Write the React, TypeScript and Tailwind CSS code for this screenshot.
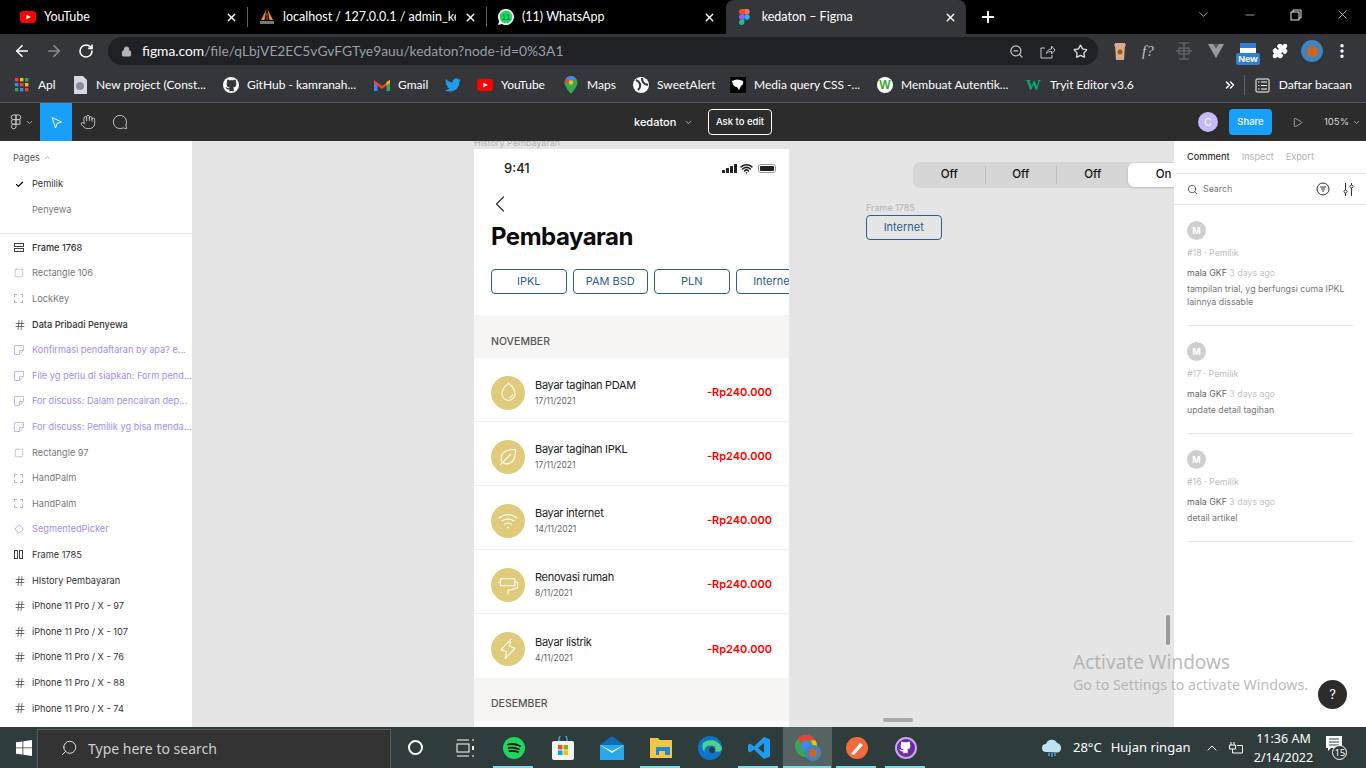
import React from 'react';
import {
  ArrowLeft, ArrowRight, RotateCw, Lock, ZoomOut, Star, Puzzle, Plus, X, ChevronDown, ChevronUp, Minus,
  Check, Hand, MessageCircle, Play, Search, Hash, Wifi,
  Square, MoreVertical, ChevronLeft, ChevronsRight, Github,
} from 'lucide-react';
import { PiDropLight, PiLeafLight, PiWifiHighLight, PiPaintRollerLight, PiLightningLight } from 'react-icons/pi';

const YouTubeIcon = () => (
  <svg width="16" height="12" viewBox="0 0 16 12" className="shrink-0">
    <rect width="16" height="12" rx="3" fill="#f00" />
    <path d="M6.4 3.4 10.8 6 6.4 8.6z" fill="#fff" />
  </svg>
);

const TabClose = () => <X className="w-[13px] h-[13px] text-white shrink-0" strokeWidth={2.5} />;

const FigmaLogo = ({ size = 16 }: { size?: number }) => (
  <svg width={size * 0.67} height={size} viewBox="0 0 24 36" className="shrink-0">
    <path d="M12 0H6a6 6 0 0 0 0 12h6z" fill="#f24e1e" />
    <path d="M12 0h6a6 6 0 0 1 0 12h-6z" fill="#ff7262" />
    <path d="M12 12H6a6 6 0 0 0 0 12h6z" fill="#a259ff" />
    <circle cx="18" cy="18" r="6" fill="#1abcfe" />
    <path d="M6 24h6v6a6 6 0 1 1-6-6z" fill="#0acf83" />
  </svg>
);

const TabBar = () => (
  <div className="h-[34px] bg-black flex items-end shrink-0 text-white text-[12.5px] font-['Lato',sans-serif]">
    <div className="w-[247px] h-[34px] flex items-center pl-5 pr-[9px] gap-2">
      <YouTubeIcon />
      <span className="flex-1">YouTube</span>
      <TabClose />
    </div>
    <div className="w-px h-[20px] bg-[#5f6368] mb-[7px]" />
    <div className="w-[238px] h-[34px] flex items-center pl-[11px] pr-[9px] gap-2">
      <svg width="16" height="16" viewBox="0 0 16 16" className="shrink-0">
        <path d="M7.500 0 2 11h3.500zM8.500 0 14 11h-3.500z" fill="#e8912c" />
        <path d="M7.400 4h1.200v7H7.400z" fill="#a8551a" />
        <path d="M1 12h14v3H1z" fill="#77787a" />
      </svg>
      <span className="flex-1 overflow-hidden whitespace-nowrap">localhost / 127.0.0.1 / admin_ked</span>
      <TabClose />
    </div>
    <div className="w-px h-[20px] bg-[#5f6368] mb-[7px]" />
    <div className="w-[238px] h-[34px] flex items-center pl-[11px] pr-[9px] gap-2">
      <svg width="16" height="16" viewBox="0 0 16 16" className="shrink-0">
        <path d="M8 0a8 8 0 0 0-6.800 12.200L0 16l3.900-1.100A8 8 0 1 0 8 0z" fill="#fff" />
        <circle cx="8" cy="8" r="6.400" fill="#25d366" />
        <text x="8" y="11" fontSize="8.500" fill="#083" textAnchor="middle" fontFamily="Liberation Sans">11</text>
      </svg>
      <span className="flex-1">(11) WhatsApp</span>
      <TabClose />
    </div>
    <div className="w-[240px] h-[34px] ml-[1px] bg-[#35363a] rounded-t-lg flex items-center pl-[13px] pr-[9px] gap-[12px]">
      <FigmaLogo />
      <span className="flex-1">kedaton – Figma</span>
      <TabClose />
    </div>
    <div className="w-[44px] h-[34px] flex items-center justify-center">
      <Plus className="w-[18px] h-[18px] text-white" strokeWidth={2.5} />
    </div>
    <div className="ml-auto h-[34px] flex items-center pr-[16px] pb-[5px] text-[#d8d8d8]">
      <ChevronDown className="w-[15px] h-[15px] mr-[32px]" strokeWidth={1.2} />
      <Minus className="w-[14px] h-[14px] mr-[33px]" strokeWidth={1.2} />
      <svg width="12" height="12" viewBox="0 0 12 12" className="mr-[33px]" fill="none" stroke="#e8e8e8">
        <rect x="1" y="3" width="8" height="8" />
        <path d="M3 3V1h8v8H9" />
      </svg>
      <X className="w-[15px] h-[15px]" strokeWidth={1.2} />
    </div>
  </div>
);

const AddressBar = () => (
  <div className="h-[34px] bg-[#35363a] flex items-center shrink-0 font-['Lato',sans-serif]">
    <ArrowLeft className="w-[18px] h-[18px] text-white ml-[13px]" strokeWidth={2.2} />
    <ArrowRight className="w-[18px] h-[18px] text-[#8a8b8d] ml-[14px]" strokeWidth={2.2} />
    <RotateCw className="w-[16px] h-[16px] text-white ml-[15px]" strokeWidth={2.4} />
    <div className="ml-[14px] w-[990px] h-[28px] rounded-full bg-[#202124] flex items-center">
      <Lock className="w-[11px] h-[11px] ml-[13px] text-[#b5b6b8]" fill="#b5b6b8" />
      <div className="ml-[10px] text-[13.8px] text-[#9aa0a6] flex-1 whitespace-nowrap">
        <span className="text-white">figma.com</span>/file/qLbjVE2EC5vGvFGTye9auu/kedaton?node-id=0%3A1
      </div>
      <ZoomOut className="w-[15px] h-[15px] text-[#c4c6c8]" />
      <svg width="16" height="15" viewBox="0 0 16 15" fill="none" stroke="#c4c6c8" className="ml-[16px]">
        <path d="M5 4H1v10h11v-3M6.500 9.500C7 6.500 9 5 11.500 5V2L15 6l-3.500 4V7.500c-2 0-4 .5-5 2z" />
      </svg>
      <Star className="w-[15px] h-[15px] text-[#d8d8d8] ml-[17px] mr-[10px]" strokeWidth={2.2} />
    </div>
    <svg width="14" height="18" viewBox="0 0 14 18" className="ml-[15px]">
      <path d="M2 1h10l1 3H1zM2 4h10l-1 14H3z" fill="#d9a98a" />
      <circle cx="7" cy="10" r="2.500" fill="#a4571e" />
    </svg>
    <span className="ml-[15px] w-[20px] text-[15px] italic text-[#c4c4c4] font-['Liberation_Serif',serif]">f?</span>
    <svg width="18" height="18" viewBox="0 0 18 18" className="ml-[13px]" stroke="#6f7072" fill="none">
      <path d="M9 1v16M1 9h16M4 1h10M4 17h10" />
      <rect x="4" y="6" width="10" height="6" />
    </svg>
    <svg width="16" height="14" viewBox="0 0 16 14" className="ml-[15px]">
      <path d="M0 0h16L8 14z" fill="#9a9b9d" />
      <path d="M5 0h6L8 5z" fill="#5c5d5f" />
    </svg>
    <div className="ml-[12px] w-[24px] h-[28px] flex flex-col items-center relative">
      <div className="w-[16px] h-[12px] bg-white rounded-[1px] mt-[6px]">
        <div className="h-[5px] bg-[#2f7fd6]" />
      </div>
      <div className="absolute top-[16px] w-[24px] h-[12px] rounded-[2px] bg-[#2f7fd6] text-white text-[9.5px] font-bold leading-[12px] text-center font-['Liberation_Sans',sans-serif]">New</div>
    </div>
    <Puzzle className="w-[16px] h-[16px] text-white ml-[12px]" fill="#fff" />
    <div className="ml-[13px] w-[22px] h-[22px] rounded-full bg-[#3f83bf] flex items-center justify-center">
      <div className="w-[11px] h-[11px] rounded-full bg-[#d0651f]" />
    </div>
    <MoreVertical className="w-[18px] h-[18px] text-white ml-[10px]" strokeWidth={2.6} />
  </div>
);

const GridIcon = () => (
  <svg width="16" height="16" viewBox="0 0 16 16" className="shrink-0">
    {[0, 1, 2].map((r) =>
      [0, 1, 2].map((c) => (
        <rect key={`${r}-${c}`} x={1 + c * 5} y={1 + r * 5} width="3.400" height="3.400"
          fill={['#ea4335', '#fbbc04', '#34a853', '#4285f4', '#ea4335', '#fbbc04', '#34a853', '#4285f4', '#ea4335'][r * 3 + c]} />
      ))
    )}
  </svg>
);

const Bookmark = ({ icon, label, className }: { icon: React.ReactNode; label?: string; className: string }) => (
  <div className={`flex items-center gap-2 whitespace-nowrap ${className}`}>
    {icon}
    {label && <span>{label}</span>}
  </div>
);

const BookmarksBar = () => (
  <div className="h-[35px] bg-[#35363a] flex items-center shrink-0 pl-[14px] text-white text-[12px] border-b border-[#55565a] font-['Lato',sans-serif]">
    <Bookmark className="w-[58px]" icon={<GridIcon />} label="Apl" />
    <Bookmark className="w-[151px]" label="New project (Const..." icon={
      <svg width="16" height="18" viewBox="0 0 16 18" className="shrink-0">
        <path d="M2 0h9l4 4v14H2z" fill="#d7d7e0" />
        <circle cx="8" cy="10" r="4" fill="#8a8aa0" />
      </svg>} />
    <Bookmark className="w-[151px]" label="GitHub - kamranah..." icon={
      <div className="w-4 h-4 rounded-full bg-white flex items-center justify-center shrink-0">
        <Github className="w-[13px] h-[13px] text-[#35363a]" fill="#35363a" />
      </div>} />
    <Bookmark className="w-[71px]" label="Gmail" icon={
      <svg width="16" height="12" viewBox="0 0 16 12" className="shrink-0">
        <path d="M0 1v11h3.500V5z" fill="#4285f4" />
        <path d="M16 1v11h-3.500V5z" fill="#34a853" />
        <path d="M0 1 8 7l8-6v3L8 10 0 4z" fill="#ea4335" />
        <path d="M12.500 3 16 1v3l-3.500 2.500z" fill="#fbbc04" />
      </svg>} />
    <Bookmark className="w-[32px]" icon={
      <svg width="16" height="14" viewBox="0 0 24 20" className="shrink-0">
        <path d="M24 2.400a10 10 0 0 1-2.800.8A5 5 0 0 0 23.300.5a10 10 0 0 1-3.100 1.200A4.900 4.900 0 0 0 11.800 6.200 14 14 0 0 1 1.700 1a4.900 4.900 0 0 0 1.500 6.600 4.900 4.900 0 0 1-2.200-.6 4.900 4.900 0 0 0 3.900 4.900 5 5 0 0 1-2.200.1 4.900 4.900 0 0 0 4.600 3.400A10 10 0 0 1 0 17.400 14 14 0 0 0 21.500 5z" fill="#1d9bf0" />
      </svg>} />
    <Bookmark className="w-[86px]" icon={<YouTubeIcon />} label="YouTube" />
    <Bookmark className="w-[70px]" label="Maps" icon={
      <svg width="14" height="18" viewBox="0 0 14 18" className="shrink-0 mx-px">
        <path d="M7 0a6.500 6.500 0 0 0-6.500 6.500C.5 11 7 18 7 18s6.500-7 6.500-11.500A6.500 6.500 0 0 0 7 0z" fill="#34a853" />
        <path d="M2 2.300 7 6.500l4.800-4.200A6.500 6.500 0 0 0 2 2.300z" fill="#4285f4" />
        <path d="M.5 6.500 7 6.500 2 2.300A6.500 6.500 0 0 0 .5 6.500z" fill="#ea4335" />
        <circle cx="7" cy="6.500" r="2.300" fill="#fbbc04" />
      </svg>} />
    <Bookmark className="w-[97px]" label="SweetAlert" icon={
      <svg width="16" height="16" viewBox="0 0 16 16" className="shrink-0">
        <circle cx="8" cy="8" r="8" fill="#fff" />
        <path d="M3 3q3 1 4 4t-2 6M9 1q0 4 3 6l3 1" stroke="#35363a" strokeWidth="2" fill="none" />
      </svg>} />
    <Bookmark className="w-[147px]" label="Media query CSS -..." icon={
      <svg width="16" height="16" viewBox="0 0 16 16" className="shrink-0">
        <rect width="16" height="16" fill="#000" />
        <path d="M2 4q5-3 11 0 1 3-2 5l-2 4-2-3q-4 0-5-6z" fill="#fff" />
      </svg>} />
    <Bookmark className="w-[149px]" label="Membuat Autentik..." icon={
      <div className="w-4 h-4 rounded-full bg-white text-[#3fa535] text-[12px] font-bold leading-4 text-center shrink-0 font-['Liberation_Sans',sans-serif]">W</div>} />
    <Bookmark className="" label="Tryit Editor v3.6" icon={
      <span className="w-4 text-[#04aa6d] text-[15px] font-bold leading-4 shrink-0 font-['Liberation_Serif',serif]">W</span>} />
    <div className="ml-auto flex items-center pr-[14px]">
      <ChevronsRight className="w-[14px] h-[14px] text-white" strokeWidth={2.5} />
      <div className="w-px h-[20px] bg-[#5f6368] ml-[7px] mr-[10px]" />
      <svg width="15" height="15" viewBox="0 0 15 15" fill="none" stroke="#fff" className="mr-[9px]">
        <rect x="1" y="1" width="13" height="13" rx="1" />
        <path d="M6 4h6M6 7.500h6M6 11h6M3 4h1.500M3 7.500h1.500M3 11h1.500" />
      </svg>
      <span>Daftar bacaan</span>
    </div>
  </div>
);

const FigmaBar = () => (
  <div className="h-[38px] bg-[#2c2c2c] flex items-center shrink-0 text-white text-[11px] font-['Inter',sans-serif]">
    <div className="w-[40px] flex items-center pl-[10px] gap-[3px]">
      <svg width="12" height="16" viewBox="0 0 12 16" fill="none" stroke="#c8c8c8">
        <path d="M6 1H3.500a2.300 2.300 0 0 0 0 4.600H6zM6 1h2.500a2.300 2.300 0 0 1 0 4.600H6zM6 5.600H3.500a2.300 2.300 0 0 0 0 4.600H6zM6 10.200H3.500A2.300 2.300 0 1 0 6 12.500zM6 5.600h4v4.600H6z" />
      </svg>
      <ChevronDown className="w-[9px] h-[9px] text-[#c8c8c8]" />
    </div>
    <div className="w-[32px] h-[38px] bg-[#18a0fb] flex items-center justify-center">
      <svg width="13" height="13" viewBox="0 0 13 13" fill="none" stroke="#fff">
        <path d="M2 1.500 11.500 6 7 7.500 5.500 12z" />
      </svg>
    </div>
    <Hand className="w-[16px] h-[16px] ml-[8px] text-[#e0e0e0]" strokeWidth={1.2} />
    <MessageCircle className="w-[16px] h-[16px] ml-[16px] text-[#e0e0e0] -scale-x-100" strokeWidth={1.2} />
    <div className="ml-[506px] w-[43px] font-medium">kedaton</div>
    <ChevronDown className="w-[9px] h-[9px] ml-[7px] text-[#c8c8c8]" />
    <div className="ml-[15px] w-[64px] h-[26px] border border-white rounded-[4px] flex items-center justify-center text-[9.5px] font-medium">Ask to edit</div>
    <div className="ml-[426px] w-[20px] h-[20px] rounded-full bg-[#c7b9f5] flex items-center justify-center text-[10px]">C</div>
    <div className="ml-[11px] w-[43px] h-[26px] rounded-[4px] bg-[#18a0fb] flex items-center justify-center text-[9.5px] font-medium">Share</div>
    <Play className="w-[11px] h-[11px] ml-[20px] text-[#d0d0d0]" strokeWidth={1.5} />
    <div className="ml-[21px] text-[9.5px] text-[#d8d8d8]">105%</div>
    <ChevronDown className="w-[9px] h-[9px] ml-[3px] text-[#c8c8c8]" />
  </div>
);

const LayerIcon = ({ kind }: { kind: string }) => {
  if (kind === 'hash') return <Hash className="w-[12px] h-[12px] text-[#444]" strokeWidth={1.5} />;
  if (kind === 'rect') return <Square className="w-[10px] h-[10px] text-[#a8a8a8]" strokeWidth={1.5} />;
  if (kind === 'dash') return <div className="w-[9px] h-[9px] border border-dashed border-[#bbb]" />;
  if (kind === 'stack') return (
    <svg width="10" height="9" viewBox="0 0 10 9" fill="none" stroke="#444"><rect x=".5" y=".5" width="9" height="3" /><rect x=".5" y="5.500" width="9" height="3" /></svg>
  );
  if (kind === 'cols') return (
    <svg width="9" height="9" viewBox="0 0 9 9" fill="none" stroke="#444"><rect x=".5" y=".5" width="3" height="8" /><rect x="5.500" y=".5" width="3" height="8" /></svg>
  );
  if (kind === 'note') return (
    <svg width="10" height="10" viewBox="0 0 10 10" fill="none" stroke="#c9b6fb"><path d="M.5.5h9v5l-4 4h-5zM9.500 5.500h-4v4" /></svg>
  );
  return (
    <svg width="10" height="10" viewBox="0 0 10 10" fill="none" stroke="#b79dfb"><path d="M5 .7 9.300 5 5 9.300.7 5z" /></svg>
  );
};

const layers: { kind: string; name: string; tone: string }[] = [
  { kind: 'stack', name: 'Frame 1768', tone: 'text-[#333] font-medium' },
  { kind: 'rect', name: 'Rectangle 106', tone: 'text-[#777]' },
  { kind: 'dash', name: 'LockKey', tone: 'text-[#777]' },
  { kind: 'hash', name: 'Data Pribadi Penyewa', tone: 'text-[#333] font-medium' },
  { kind: 'note', name: 'Konfirmasi pendaftaran by apa? e...', tone: 'text-[#a88bf8]' },
  { kind: 'note', name: 'File yg perlu di siapkan: Form pend...', tone: 'text-[#a88bf8]' },
  { kind: 'note', name: 'For discuss: Dalam pencairan dep...', tone: 'text-[#a88bf8]' },
  { kind: 'note', name: 'For discuss: Pemilik yg bisa menda...', tone: 'text-[#a88bf8]' },
  { kind: 'rect', name: 'Rectangle 97', tone: 'text-[#777]' },
  { kind: 'dash', name: 'HandPalm', tone: 'text-[#777]' },
  { kind: 'dash', name: 'HandPalm', tone: 'text-[#777]' },
  { kind: 'diamond', name: 'SegmentedPicker', tone: 'text-[#a88bf8]' },
  { kind: 'cols', name: 'Frame 1785', tone: 'text-[#333]' },
  { kind: 'hash', name: 'HIstory Pembayaran', tone: 'text-[#333]' },
  { kind: 'hash', name: 'iPhone 11 Pro / X - 97', tone: 'text-[#333]' },
  { kind: 'hash', name: 'iPhone 11 Pro / X - 107', tone: 'text-[#333]' },
  { kind: 'hash', name: 'iPhone 11 Pro / X - 76', tone: 'text-[#333]' },
  { kind: 'hash', name: 'iPhone 11 Pro / X - 88', tone: 'text-[#333]' },
  { kind: 'hash', name: 'iPhone 11 Pro / X - 74', tone: 'text-[#333]' },
];

const LeftPanel = () => (
  <aside className="w-[192px] shrink-0 bg-white flex flex-col text-[9.2px] overflow-hidden">
    <div className="h-[93px] shrink-0 border-b border-[#e5e5e5]">
      <div className="h-[31px] pt-[2px] pl-[13px] flex items-center gap-[3px] text-[#555]">
        Pages <ChevronUp className="w-[9px] h-[9px] text-[#aaa]" />
      </div>
      <div className="h-[26px] mt-[-1px] flex items-center text-[#333]">
        <Check className="w-[9px] h-[9px] ml-[15px] mr-[8px] text-black" strokeWidth={3} />
        Pemilik
      </div>
      <div className="h-[26px] flex items-center pl-[32px] text-[#777]">Penyewa</div>
    </div>
    <div className="pt-px">
      {layers.map((l, i) => (
        <div key={i} className="h-[25.6px] flex items-center">
          <div className="w-[32px] shrink-0 pl-[14px] flex items-center">
            <LayerIcon kind={l.kind} />
          </div>
          <span className={`whitespace-nowrap ${l.tone}`}>{l.name}</span>
        </div>
      ))}
    </div>
  </aside>
);

const payments = [
  { icon: <PiDropLight size={21} />, title: 'Bayar tagihan PDAM', date: '17/11/2021' },
  { icon: <PiLeafLight size={22} />, title: 'Bayar tagihan IPKL', date: '17/11/2021' },
  { icon: <PiWifiHighLight size={22} />, title: 'Bayar internet', date: '14/11/2021' },
  { icon: <PiPaintRollerLight size={22} />, title: 'Renovasi rumah', date: '8/11/2021' },
  { icon: <PiLightningLight size={22} />, title: 'Bayar listrik', date: '4/11/2021' },
];

const Chip = ({ label }: { label: string }) => (
  <div className="h-[25px] w-[75.5px] shrink-0 border border-[#2f5d8f] rounded-[4px] flex items-center justify-center text-[11px] text-[#2f5d8f]">
    {label}
  </div>
);

const Phone = () => (
  <div className="absolute left-[282px] top-[8px] w-[315px] h-[600px] bg-white overflow-hidden font-['Inter',sans-serif]">
    <div className="h-[38px] pt-px flex items-center pl-[30px] pr-[11px] justify-between">
      <span className="text-[13px] font-medium text-[#222]">9:41</span>
      <div className="flex items-center gap-[3px]">
        <svg width="15" height="9" viewBox="0 0 15 9" fill="#222">
          <rect x="0" y="6" width="3" height="3" rx=".5" /><rect x="4" y="4" width="3" height="5" rx=".5" /><rect x="8" y="2" width="3" height="7" rx=".5" /><rect x="12" y="0" width="3" height="9" rx=".5" />
        </svg>
        <Wifi className="w-[13px] h-[13px] text-[#222]" strokeWidth={3} />
        <svg width="20" height="9" viewBox="0 0 20 9" className="ml-[2px]">
          <rect x=".5" y=".5" width="17" height="8" rx="2.500" fill="none" stroke="#999" />
          <rect x="2" y="2" width="14" height="5" rx="1" fill="#222" />
        </svg>
      </div>
    </div>
    <div className="h-[34px] pl-[12px] flex items-center">
      <ChevronLeft className="w-[28px] h-[28px] text-[#333]" strokeWidth={1.1} />
    </div>
    <h1 className="h-[30px] mt-px pl-[17px] text-[24px] leading-[30px] font-bold text-[#0a0a0a] tracking-[-0.5px]">Pembayaran</h1>
    <div className="mt-[17px] pl-[17px] flex gap-[6px] overflow-hidden">
      <Chip label="IPKL" />
      <Chip label="PAM BSD" />
      <Chip label="PLN" />
      <Chip label="Internet" />
    </div>
    <div className="mt-[21px] h-[43px] bg-[#f6f5f4] pl-[17px] pt-[20px] text-[10.5px] font-medium leading-[13px] text-[#555]">NOVEMBER</div>
    {payments.map((p, i) => (
      <div key={i} className={`h-[64px] pt-[6px] flex items-center pl-[17px] pr-[17px] ${i < 4 ? 'border-b border-[#f0f0f0]' : ''}`}>
        <div className="w-[34px] h-[34px] rounded-full bg-[#e0cb7c] text-white flex items-center justify-center shrink-0">{p.icon}</div>
        <div className="ml-[10px] flex-1">
          <div className="text-[11px] leading-[14px] text-[#222] tracking-[-0.3px]">{p.title}</div>
          <div className="text-[8.5px] leading-[11px] mt-[4px] text-[#666]">{p.date}</div>
        </div>
        <div className="text-[11px] font-semibold text-[#f00]">-Rp240.000</div>
      </div>
    ))}
    <div className="h-[43px] bg-[#f6f5f4] pl-[17px] pt-[19px] text-[10.5px] font-medium leading-[13px] text-[#555]">DESEMBER</div>
  </div>
);

const Segmented = () => (
  <div className="absolute left-[721px] top-[21px] w-[290px] h-[26px] rounded-[7px] bg-[#d6d6d6] flex items-center pl-[1px] text-[11.5px] text-[#111] font-medium font-['Inter',sans-serif]">
    <div className="w-[71.5px] shrink-0 text-center border-r border-[#bdbdbd]">Off</div>
    <div className="w-[71.5px] shrink-0 text-center border-r border-[#bdbdbd]">Off</div>
    <div className="w-[71.5px] shrink-0 text-center">Off</div>
    <div className="w-[72px] h-[24px] shrink-0 ml-[-1px] bg-white rounded-[6px] flex items-center justify-center shadow-sm">On</div>
  </div>
);

const comments = [
  { id: '#18 · Pemilik', lines: ['tampilan trial, yg berfungsi cuma IPKL', 'lainnya dissable'] },
  { id: '#17 · Pemilik', lines: ['update detail tagihan'] },
  { id: '#16 · Pemilik', lines: ['detail artikel'] },
];

const RightPanel = () => (
  <aside className="w-[192px] shrink-0 bg-white flex flex-col z-10 text-[8.8px] font-['Inter',sans-serif]">
    <div className="h-[33px] shrink-0 border-b border-[#e5e5e5] flex items-center pl-[13px] gap-[12px] text-[9.2px]">
      <span className="text-[#333] font-medium">Comment</span>
      <span className="text-[#b3b3b3]">Inspect</span>
      <span className="text-[#b3b3b3]">Export</span>
    </div>
    <div className="h-[31px] shrink-0 border-b border-[#e5e5e5] flex items-center pl-[13px] pr-[12px] text-[#777]">
      <Search className="w-[11px] h-[11px] text-[#555]" />
      <span className="ml-[5px] flex-1">Search</span>
      <svg width="14" height="14" viewBox="0 0 14 14" fill="none" stroke="#333" className="mr-[-1px]">
        <circle cx="7" cy="7" r="6" /><path d="M4 5h6M5 7h4M6 9h2" />
      </svg>
      <svg width="11" height="13" viewBox="0 0 11 13" fill="none" stroke="#333" className="ml-[14px]">
        <path d="M2.500 0v7M2.500 10v3M8.500 0v2M8.500 5v8" /><circle cx="2.500" cy="8.500" r="1.500" /><circle cx="8.500" cy="3.500" r="1.500" />
      </svg>
    </div>
    {comments.map((c) => (
      <div key={c.id} className="mx-[13px] pt-[16px] pb-[17px] border-b border-[#e5e5e5]">
        <div className="w-[19px] h-[19px] rounded-full bg-[#cfcfcf] text-white text-[9px] font-bold flex items-center justify-center">M</div>
        <div className="mt-[7px] leading-[12px] text-[#bdbdbd]">{c.id}</div>
        <div className="mt-[8px] leading-[12px]"><span className="text-[#666]">mala GKF</span> <span className="text-[#c4c4c4]">3 days ago</span></div>
        <div className="mt-[3px] leading-[13px] text-[#777]">
          {c.lines.map((l) => <div key={l}>{l}</div>)}
        </div>
      </div>
    ))}
  </aside>
);

const Canvas = () => (
  <main className="flex-1 bg-[#e5e5e5] relative overflow-hidden">
    <div className="absolute left-[282px] top-[-5px] text-[9px] text-[#b3b3b3] font-['Inter',sans-serif]">History Pembayaran</div>
    <Phone />
    <Segmented />
    <div className="absolute left-[674px] top-[60px] text-[9px] text-[#b3b3b3] font-['Inter',sans-serif]">Frame 1785</div>
    <div className="absolute left-[674px] top-[74px] font-['Inter',sans-serif]">
      <Chip label="Internet" />
    </div>
    <div className="absolute left-[691px] top-[577px] w-[30px] h-[4px] rounded-full bg-[#aaa]" />
    <div className="absolute left-[974px] top-[474px] w-[4px] h-[30px] rounded-full bg-[#999]" />
  </main>
);

const slots: { node: React.ReactNode; active?: boolean; open?: boolean }[] = [
  { open: true, node: (
    <svg width="22" height="22" viewBox="0 0 22 22"><circle cx="11" cy="11" r="11" fill="#1ed760" /><path d="M5 7.500q6-1.500 12 1.500M5.700 11q5-1.200 10.300 1.300M6.500 14.200q4-.8 8.500 1" stroke="#111" strokeWidth="1.800" fill="none" strokeLinecap="round" /></svg>
  ) },
  { node: (
    <svg width="22" height="24" viewBox="0 0 22 24"><path d="M7 6V3a4 4 0 0 1 8 0v3" stroke="#2fa4e8" strokeWidth="1.500" fill="none" /><rect y="5" width="22" height="19" rx="2" fill="#f4f4f4" /><rect x="6" y="9" width="4.500" height="4.500" fill="#f25022" /><rect x="11.500" y="9" width="4.500" height="4.500" fill="#7fba00" /><rect x="6" y="14.500" width="4.500" height="4.500" fill="#00a4ef" /><rect x="11.500" y="14.500" width="4.500" height="4.500" fill="#ffb900" /></svg>
  ) },
  { node: (
    <svg width="24" height="24" viewBox="0 0 24 24"><path d="M12 0 24 9v15H0V9z" fill="#0f6cbd" /><path d="M0 9h24v15H0z" fill="#28a8ea" /><path d="M0 9l12 8 12-8-12 6z" fill="#fff" /></svg>
  ) },
  { open: true, node: (
    <svg width="22" height="22" viewBox="0 0 22 22"><path d="M0 1h8l2 2h12v18H0z" fill="#f3c746" /><rect x="6" y="10" width="14" height="8" fill="#1e88d9" /><rect x="9" y="14" width="6" height="7" fill="#f3c746" /></svg>
  ) },
  { node: (
    <svg width="24" height="24" viewBox="0 0 24 24"><circle cx="12" cy="12" r="12" fill="#0c75c9" /><path d="M5 7a12 12 0 0 1 19 5c0 4-5 4.500-7 3 2-3-1-6-5-5.500S5 13 7 17a10 10 0 0 1-2-10z" fill="#4dd28a" /><circle cx="14" cy="14" r="3" fill="#2f3d3d" /></svg>
  ) },
  { open: true, node: (
    <svg width="24" height="24" viewBox="0 0 24 24"><path d="M17 1 7 10.500 3 7.500 1 9v6l2 1.500 4-3L17 23l6-2.500v-17zM17 7v10l-6-5z" fill="#1f9cf0" /></svg>
  ) },
  { active: true, open: true, node: (
    <div className="relative w-[26px] h-[26px]">
      <svg width="22" height="22" viewBox="0 0 22 22"><circle cx="11" cy="11" r="11" fill="#34a853" /><path d="M11 0a11 11 0 0 1 9.500 5.500H11a5.500 5.500 0 0 0-5 3L2.500 4A11 11 0 0 1 11 0z" fill="#ea4335" /><path d="M20.500 5.500A11 11 0 0 1 11 22l4.500-8a5.500 5.500 0 0 0 0-8.500z" fill="#fbbc04" /><circle cx="11" cy="11" r="5" fill="#4285f4" /></svg>
      <div className="absolute right-0 bottom-0 w-[16px] h-[16px] rounded-full bg-[#3f83bf] flex items-center justify-center"><div className="w-[8px] h-[8px] rounded-full bg-[#d0651f]" /></div>
    </div>
  ) },
  { open: true, node: (
    <svg width="22" height="22" viewBox="0 0 22 22"><circle cx="11" cy="11" r="11" fill="#f26b3a" /><path d="M5 17 14 6l3 2-9 10z" fill="#fff" /></svg>
  ) },
  { open: true, node: (
    <div className="w-[22px] h-[22px] rounded-full bg-[#6a2ba8] border-2 border-[#c9a7ea] flex items-center justify-center">
      <Github className="w-[13px] h-[13px] text-white" fill="#fff" />
    </div>
  ) },
];

const Taskbar = () => (
  <div className="h-[41px] shrink-0 bg-[#2f3c3c] flex items-center text-white font-['Noto_Sans',sans-serif]">
    <div className="w-[37px] pl-[16px]">
      <svg width="16" height="16" viewBox="0 0 16 16" fill="#fff"><path d="M0 2.300 6.500 1.400v6.100H0zM7.300 1.300 16 0v7.500H7.300zM0 8.300h6.500v6.300L0 13.700zM7.300 8.300H16V16l-8.700-1.200z" /></svg>
    </div>
    <div className="w-[354px] h-[39px] mt-[2px] pb-[2px] bg-[#333] border border-[#5a5a5a] border-b-0 flex items-center pl-[22px] text-[#d0d0d0] text-[14px]">
      <Search className="w-[18px] h-[18px] -scale-x-100 text-[#e0e0e0]" strokeWidth={1.3} />
      <span className="ml-[10px]">Type here to search</span>
    </div>
    <div className="w-[49px] flex justify-center"><div className="w-[15px] h-[15px] rounded-full border-2 border-white" /></div>
    <div className="w-[49px] flex justify-center">
      <svg width="18" height="18" viewBox="0 0 18 18" fill="none" stroke="#fff"><path d="M1 1h12M1 17h12" /><rect x="1" y="5" width="12" height="8" /><rect x="16" y="7" width="2" height="4" fill="#fff" stroke="none" /><path d="M16 1h2M16 17h2" /></svg>
    </div>
    {slots.map((s, i) => (
      <div key={i} className={`w-[49px] h-[41px] flex items-center justify-center relative ${s.active ? 'bg-[#566363]' : ''}`}>
        {s.node}
        {s.open && <div className={`absolute bottom-0 h-[2px] bg-[#76dfe6] ${s.active ? 'left-0 right-[1px]' : 'left-[4px] right-[5px]'}`} />}
      </div>
    ))}
    <svg width="22" height="18" viewBox="0 0 22 18" className="ml-[111px]">
      <path d="M5 13a4 4 0 0 1 0-8 6 6 0 0 1 11-1 5 5 0 0 1 1 9.500z" fill="#bfe3f5" />
      <path d="M8 14v3M11 14v4M14 14v3" stroke="#49a8e6" strokeWidth="1.500" />
    </svg>
    <span className="ml-[10px] text-[13px] whitespace-nowrap">28°C</span>
    <span className="ml-[9px] text-[13px] whitespace-nowrap">Hujan ringan</span>
    <ChevronUp className="w-[16px] h-[16px] ml-[14px]" strokeWidth={1.5} />
    <svg width="16" height="14" viewBox="0 0 16 14" fill="none" stroke="#fff" className="ml-[8px]"><path d="M3 4V1M6 4V1M1.500 4h6v4h-6zM4.500 8v4h10V4.500H9" /></svg>
    <div className="w-[70px] ml-[4px] text-center text-[12.5px] leading-[19px]">
      <div>11:36 AM</div>
      <div>2/14/2022</div>
    </div>
    <div className="ml-[8px] relative w-[22px] h-[24px]">
      <svg width="16" height="16" viewBox="0 0 16 16" fill="#fff" className="absolute left-0 top-0"><path d="M0 0h16v12H5l-3 3v-3H0z" /><path d="M3 3h10M3 6h10M3 9h10" stroke="#2f3c3c" /></svg>
      <div className="absolute left-[6px] top-[9px] w-[15px] h-[15px] rounded-full bg-[#2f3c3c] border border-white text-[9px] leading-[13px] text-center">15</div>
    </div>
  </div>
);

export default function App() {
  return (
    <div className="w-[1366px] h-[768px] relative overflow-hidden flex flex-col font-['Noto_Sans',sans-serif]">
      <TabBar />
      <AddressBar />
      <BookmarksBar />
      <FigmaBar />
      <div className="flex-1 flex min-h-0 font-['Inter',sans-serif]">
        <LeftPanel />
        <Canvas />
        <RightPanel />
      </div>
      <Taskbar />
      {/* windows watermark and help button float over the panels */}
      <div className="absolute left-[1073px] top-[650px] z-20 text-[#a8a8a8]/80 font-['Noto_Sans',sans-serif] whitespace-nowrap">
        <div className="text-[19px] leading-[24px]">Activate Windows</div>
        <div className="text-[14.2px] leading-[22px]">Go to Settings to activate Windows.</div>
      </div>
      <div className="absolute left-[1318px] top-[680px] z-20 w-[29px] h-[29px] rounded-full bg-[#2c2c2c] text-white text-[13px] flex items-center justify-center font-['Inter',sans-serif]">?</div>
    </div>
  );
}
